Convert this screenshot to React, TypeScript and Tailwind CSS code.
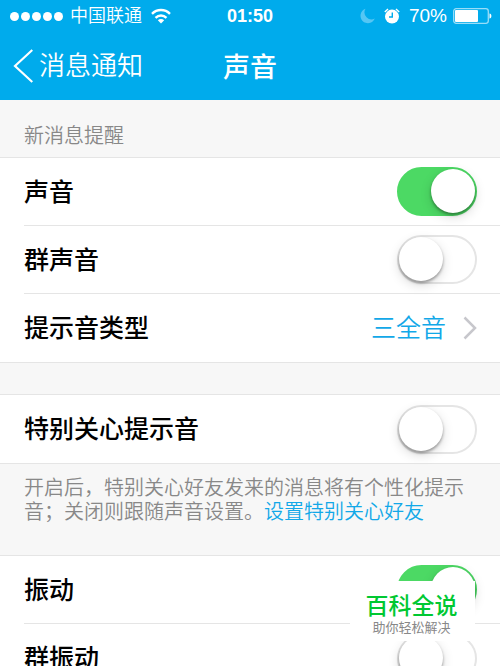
import { useState, type ReactNode } from "react";

const cjk = "font-['Liberation_Sans','Noto_Sans_CJK_SC',sans-serif]";

function StatusBar() {
  return (
    <div className="relative flex h-8 items-center justify-between pr-2 pl-[10px]">
      <div className="flex items-center">
        <div className="flex gap-[2px]" aria-label="信号">
          {[0, 1, 2, 3, 4].map((i) => (
            <span key={i} className="size-[9px] rounded-full bg-white" />
          ))}
        </div>
        <span className="ml-[7px] text-[18px] leading-8 font-[350]">中国联通</span>
        <svg className="ml-[9px]" width="20" height="16" viewBox="0 0 20 16" fill="none" stroke="white" strokeWidth="2.400">
          <path d="M1 5.800C6 .800 14 .800 19 5.800" />
          <path d="M4.500 9.800c3.200-3.100 7.800-3.100 11 0" />
          <path d="M10 15.500l-3.200-3.200c1.800-1.700 4.600-1.700 6.400 0z" fill="white" stroke="none" />
        </svg>
      </div>
      <span className="absolute inset-x-0 text-center text-[18px] leading-8 font-bold">01:50</span>
      <div className="flex items-center">
        <svg width="15" height="16" viewBox="0 0 15 16" fill="#55c6f4">
          <path d="M5.500 .8A7.400 7.400 0 1 0 14.800 10.500A7 7 0 0 1 5.500 .8z" />
        </svg>
        <svg className="ml-[9px]" width="16" height="16" viewBox="0 0 16 16" fill="none">
          <circle cx="8" cy="8.600" r="7" fill="white" />
          <path d="M.8 4L4 1M15.200 4L12 1" stroke="white" strokeWidth="1.400" />
          <path d="M8.300 4.500V9H5" stroke="#00abec" strokeWidth="1.400" />
        </svg>
        <span className="ml-[9px] text-[19px] leading-8">70%</span>
        <svg className="ml-[6px]" width="39" height="16" viewBox="0 0 39 16" fill="none">
          <rect x=".7" y=".7" width="34.600" height="14.600" rx="2.500" stroke="#99ddf8" strokeWidth="1.300" />
          <rect x="2" y="2" width="23" height="12" rx="1" fill="white" />
          <path d="M36.500 5.500c2.500 0 2.500 5 0 5z" fill="white" />
        </svg>
      </div>
    </div>
  );
}

function Header() {
  return (
    <header className="bg-[#00abec] text-white">
      <StatusBar />
      <nav className="relative flex h-[68px] items-center pl-[13px]">
        <h1 className="absolute inset-x-0 pt-1 text-center text-[27px] leading-10 font-medium">声音</h1>
        <button type="button" className="relative flex items-center gap-[6px] text-[26px] leading-10 font-[350]">
          <svg width="20" height="34" viewBox="0 0 20 34" fill="none" stroke="white" strokeWidth="2.200">
            <path d="M19.300 1L2 17L19.300 33" />
          </svg>
          消息通知
        </button>
      </nav>
    </header>
  );
}

function Switch({ id, defaultOn = false }: { id: string; defaultOn?: boolean }) {
  const [on, setOn] = useState(defaultOn);
  return (
    <input
      id={id}
      type="checkbox"
      role="switch"
      checked={on}
      onChange={(e) => setOn(e.target.checked)}
      className="h-[49px] w-20 shrink-0 appearance-none rounded-full border-2 border-[#e5e5e5] bg-white before:block before:size-11 before:rounded-full before:bg-white before:shadow-[0_2px_3px_rgba(0,0,0,0.35),0_4px_12px_rgba(0,0,0,0.15)] checked:border-[#4cd964] checked:bg-[#4cd964] checked:before:ml-8"
    />
  );
}

function Group({ children }: { children: ReactNode }) {
  return <section className="divide-y divide-[#e5e5e5] border-y border-[#e5e5e5] bg-white pl-6 [&>*]:pr-[23px]">{children}</section>;
}

function SwitchRow({ id, label, on }: { id: string; label: string; on?: boolean }) {
  return (
    <div className="flex h-[68px] items-center justify-between">
      <label htmlFor={id} className="text-[25px] leading-9 font-medium">
        {label}
      </label>
      <Switch id={id} defaultOn={on} />
    </div>
  );
}

export default function App() {
  return (
    <div className={`h-screen overflow-hidden bg-[#f7f7f7] text-black ${cjk}`} lang="zh-CN">
      <Header />
      <main>
        <h2 className="px-6 pt-[21px] pb-[6px] text-[20px] leading-[30px] font-[350] text-[#888]">新消息提醒</h2>
        <Group>
          <SwitchRow id="sound" label="声音" on />
          <SwitchRow id="group-sound" label="群声音" />
          <button type="button" className="flex h-[68px] w-full items-center text-left text-[25px] leading-9">
            <span className="flex-1 font-medium">提示音类型</span>
            <span className="font-[350] text-[#12a8e8]">三全音</span>
            <svg className="ml-[17px]" width="14" height="24" viewBox="0 0 14 24" fill="none" stroke="#c7c7cc" strokeWidth="2.500">
              <path d="M1.500 1.500L12 12L1.500 22.500" />
            </svg>
          </button>
        </Group>
        <div className="h-[31px]" />
        <Group>
          <SwitchRow id="special" label="特别关心提示音" />
        </Group>
        <p className="pt-3 pr-5 pb-[31px] pl-6 text-[20px] leading-6 font-[350] text-[#888]">
          开启后，特别关心好友发来的消息将有个性化提示音；关闭则跟随声音设置。
          <a href="#special" className="text-[#12a8e8]">
            设置特别关心好友
          </a>
        </p>
        <Group>
          <SwitchRow id="vibrate" label="振动" on />
          <SwitchRow id="group-vibrate" label="群振动" />
        </Group>
      </main>
      <aside className="fixed right-[25px] bottom-[25px] flex h-[60px] w-[125px] flex-col items-center bg-white pt-[11px] pr-[2px]">
        <strong className="text-[23px] leading-7 font-medium text-[#00c832]">百科全说</strong>
        <span className="text-[13px] leading-4 text-[#888]">助你轻松解决</span>
      </aside>
    </div>
  );
}
